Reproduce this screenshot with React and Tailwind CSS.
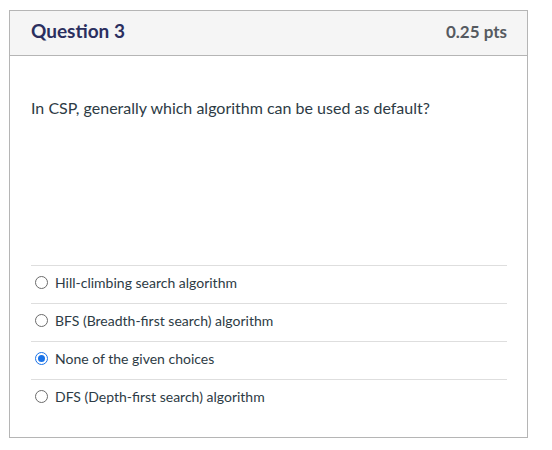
import React from 'react'

const answers = [
  { id: 'a1', label: 'Hill-climbing search algorithm' },
  { id: 'a2', label: 'BFS (Breadth-first search) algorithm' },
  { id: 'a3', label: 'None of the given choices', checked: true },
  { id: 'a4', label: 'DFS (Depth-first search) algorithm' },
]

const Radio = ({ checked }) => (
  <span
    className={`flex h-[13px] w-[13px] shrink-0 items-center justify-center rounded-full border ${
      checked ? 'border-[#1a73e8]' : 'border-[#6b6b6b]'
    } bg-white`}
  >
    {checked && <span className="h-[7px] w-[7px] rounded-full bg-[#1a73e8]" />}
  </span>
)

export default function App() {
  return (
    <div className="min-h-[450px] bg-white pl-[9px] pt-[10px]" style={{ fontFamily: 'Lato, "Open Sans", sans-serif' }}>
      <div className="w-[519px] border border-[#b5b5b5]">
        {/* header */}
        <div className="flex h-[45px] items-center justify-between border-b border-[#b5b5b5] bg-[#f5f5f5] pl-[21px] pr-[20px] pb-[3px]">
          <h2 className="text-[19px] font-bold text-[#2b2f5f]">Question 3</h2>
          <span className="text-[17px] font-bold text-[#555a60]">0.25 pts</span>
        </div>

        {/* body */}
        <div className="pl-[21px] pr-[20px] pt-[42px] pb-[20px]">
          <p className="text-[16px] leading-[20px] text-[#2d3b45]">
            In CSP, generally which algorithm can be used as default?
          </p>
          <div className="mt-[147px]">
            {answers.map(a => (
              <label
                key={a.id}
                className="flex h-[38px] items-center gap-[7px] border-t border-[#dedede] pl-[4px] pb-[5px] text-[14px] text-[#2d3b45]"
              >
                <Radio checked={a.checked} />
                <span>{a.label}</span>
              </label>
            ))}
          </div>
        </div>
      </div>
    </div>
  )
}
